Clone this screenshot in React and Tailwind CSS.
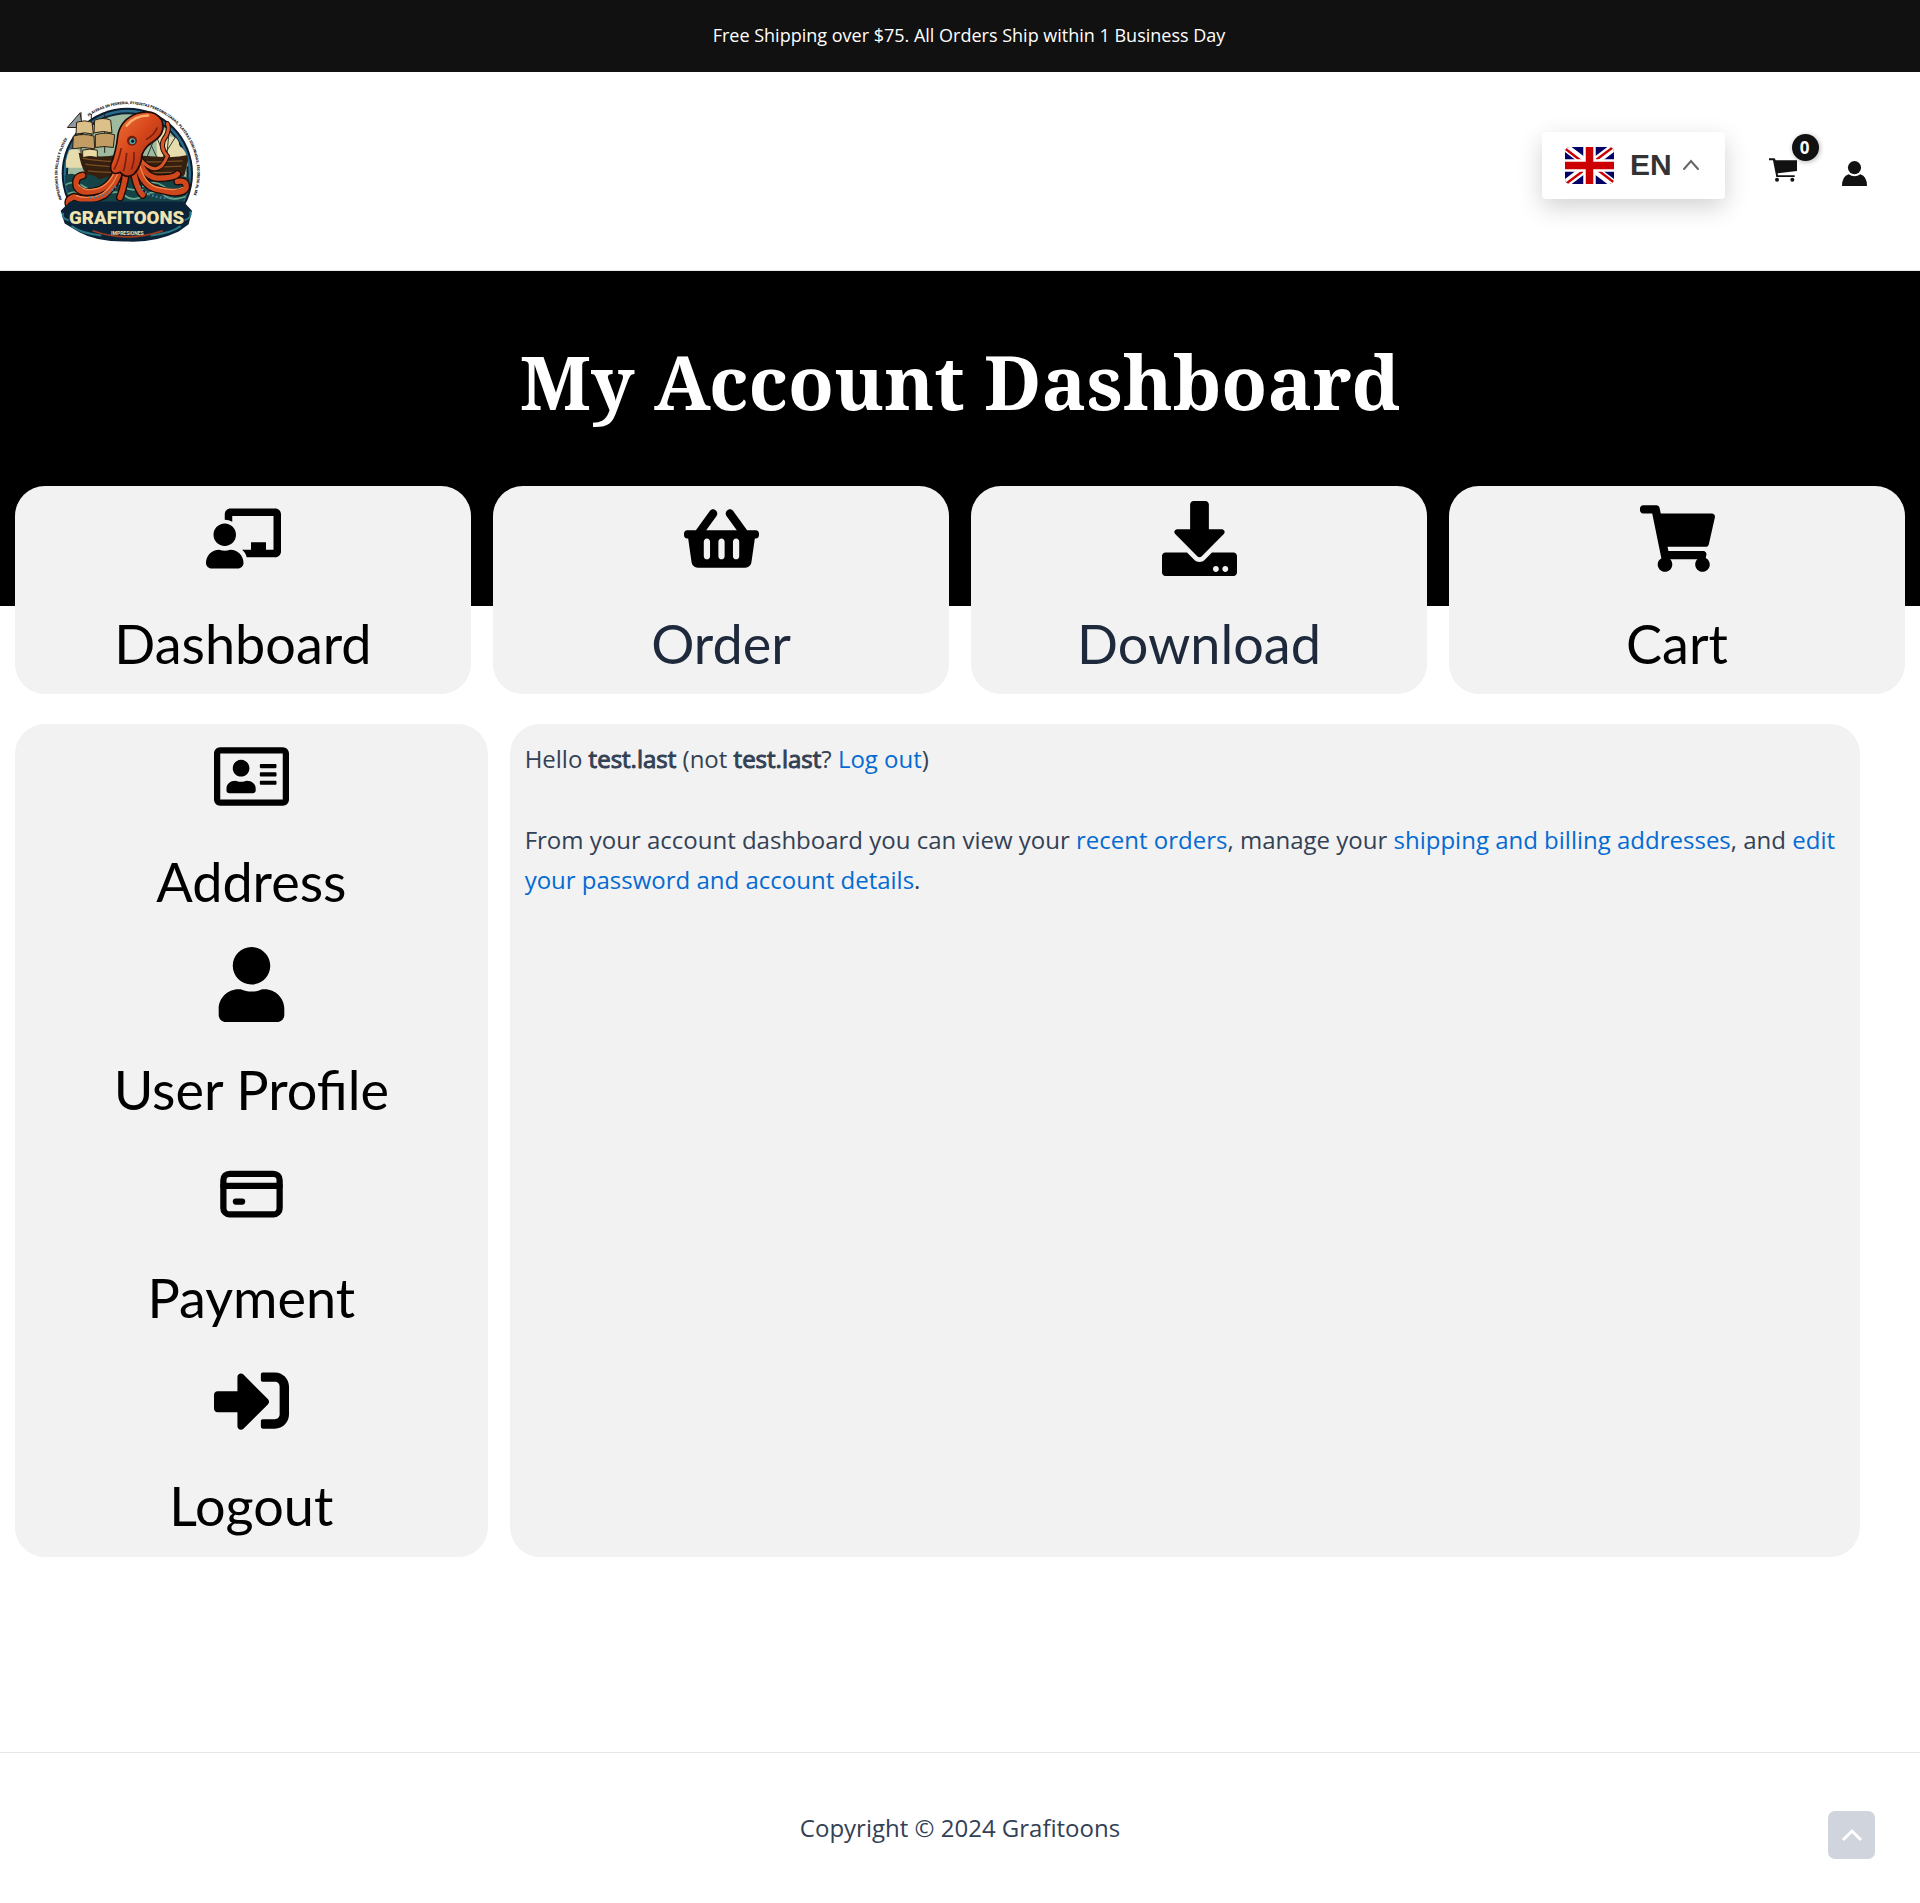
import React from "react";
import {
  FaChalkboardTeacher,
  FaShoppingBasket,
  FaDownload,
  FaShoppingCart,
  FaRegAddressCard,
  FaUser,
  FaSignInAlt,
} from "react-icons/fa";

function Logo() {
  return (
    <svg viewBox="44 32 444 428" className="h-[143px] w-[148px] overflow-visible" role="img" aria-label="Grafitoons">
      <defs>
        <clipPath id="disc"><circle cx="264" cy="252" r="188" /></clipPath>
        <linearGradient id="skin" x1="0" y1="0" x2="1" y2="1">
          <stop offset="0" stopColor="#f07a3c" />
          <stop offset="0.45" stopColor="#d9481c" />
          <stop offset="1" stopColor="#8c2410" />
        </linearGradient>
        <path id="arcLeft" d="M68 330A207 207 0 0 1 100 126" />
        <path id="arcTop" d="M148 81A207 207 0 0 1 456 334" />
      </defs>
      <circle cx="264" cy="252" r="197" fill="#0b1a2c" />
      <circle cx="264" cy="252" r="191" fill="#2a6c8c" />
      <circle cx="264" cy="252" r="184" fill="#0d2233" />
      <g clipPath="url(#disc)">
        <circle cx="264" cy="252" r="178" fill="#9ebba0" />
        <path d="M80 190q25-25 45 0q25-10 30 15q20 5 10 30H80zM350 120q30-10 40 20q30 0 30 30q25 10 25 60h-90z" fill="#e6dcae" />
        <path d="M300 90l60 130M330 90l50 120M360 110l-40 100M390 120l-10 100M410 140l-50 80" stroke="#2a3b35" strokeWidth="3" />
        <path d="M118 190q60 20 120 4l120 8q50 4 92-6l-14 60q-20 26-60 24H180q-50-8-62-90z" fill="#35200f" />
        <path d="M130 206q80 18 300 8M138 224q90 14 290 6M146 244q90 10 280 4" stroke="#7c4c22" strokeWidth="4" fill="none" />
        <path d="M70 262q30-20 50 4q34-22 60 4q60-26 100 0q60-26 90 0q40-24 90 0v200H70z" fill="#144448" />
        <path d="M72 290q30-22 60 0t60 0t60 0t60 0t60 0t80 0M76 318q36-20 60 0t60 0t60 0t60 0t60 0t70 0" stroke="#6aa88c" strokeWidth="5" fill="none" />
        <path d="M70 350h390v110H70z" fill="#0c2b3c" />
      </g>
      <g stroke="#2b2013" strokeWidth="3" strokeLinejoin="round">
        <path d="M125 68v128M156 74v120M196 74v116" />
        <path d="M84 114l38-44l8 44z" fill="#8f9aa0" />
        <path d="M112 98q24-8 46 0l4 36q-26-8-52 0zM166 92q26-10 48 0l4 38q-26-8-54 0z" fill="#dcc08a" />
        <path d="M102 140q30-10 62 0l2 38q-32-8-66 0zM168 136q30-10 58 0l-4 38q-26-6-54 0z" fill="#c29c62" />
        <path d="M130 182q20-6 44 0v22q-22-6-44 0z" fill="#ecd9a4" />
      </g>
      <g fill="none" strokeLinecap="round">
        <g stroke="#1e0b08" strokeWidth="24">
          <path d="M246 200q-16 80-66 102q-56 16-68-10q-8-30 18-34" />
          <path d="M246 220q-8 60-50 96q-50 26-92 6q-26 8-12 32" />
          <path d="M262 210q0 60-20 114" />
          <path d="M296 190q10 70 58 76q50 0 60-12" />
          <path d="M290 200q10 90 66 100q70 20 84-4q4-26-26-20" />
          <path d="M280 220q6 70 30 96" />
        </g>
        <path d="M300 206q56 66 84-6q-28-30-4-60q12-22 4-38" stroke="#1e0b08" strokeWidth="15" />
        <g stroke="#cf471c" strokeWidth="16">
          <path d="M246 200q-16 80-66 102q-56 16-68-10q-8-30 18-34" />
          <path d="M246 220q-8 60-50 96q-50 26-92 6q-26 8-12 32" />
          <path d="M262 210q0 60-20 114" />
          <path d="M296 190q10 70 58 76q50 0 60-12" />
          <path d="M290 200q10 90 66 100q70 20 84-4q4-26-26-20" />
          <path d="M280 220q6 70 30 96" />
        </g>
        <path d="M300 206q56 66 84-6q-28-30-4-60q12-22 4-38" stroke="#d9582a" strokeWidth="9" />
        <g stroke="#f08a4c" strokeWidth="4">
          <path d="M238 212q-18 70-60 84q-44 12-60-10" />
          <path d="M240 236q-12 50-50 76q-40 20-80 6" />
          <path d="M300 220q14 66 58 74q50 12 72 0" />
        </g>
      </g>
      <path d="M236 134Q246 90 292 72Q344 56 366 90Q382 126 348 152Q316 170 308 196Q306 230 284 254Q262 270 242 248Q212 262 214 226Q230 190 236 134z" fill="url(#skin)" stroke="#1e0b08" strokeWidth="5" />
      <path d="M262 108Q286 78 326 78" stroke="#ffb070" strokeWidth="8" fill="none" strokeLinecap="round" />
      <path d="M246 176q-10 44-22 64M262 190q-4 40-10 56M284 188q2 30-8 52M320 150q24-12 34-36" stroke="#7a1e0e" strokeWidth="5" fill="none" />
      <circle cx="278" cy="154" r="15" fill="#6e1c0c" />
      <circle cx="279" cy="155" r="9" fill="#5aa8a4" />
      <circle cx="280" cy="155" r="5" fill="#0b1a2c" />
      <g fill="none" stroke="#4d7fa0" strokeWidth="7" strokeDasharray="5 7">
        <path d="M150 324q50 0 80-34" /><path d="M300 290q30 40 100 34" />
      </g>
      <path d="M64 364l28-28h340l26 28l-10 40l-30 22q-70 34-154 30q-90 2-144-28l-44-26z" fill="#0b2338" />
      <path d="M72 370q-8 16 16 22M452 366q8 18-16 26M96 410q30 22 90 28M424 410q-30 22-90 28" stroke="#2a7a86" strokeWidth="6" fill="none" />
      <path d="M160 424q100 36 210 0" stroke="#a23a1e" strokeWidth="5" fill="none" />
      <text x="262" y="403" textAnchor="middle" fontSize="56" className="font-['Roboto',sans-serif] font-black" fill="#f1e3b0">GRAFITOONS</text>
      <text x="264" y="437" textAnchor="middle" fontSize="15" className="font-['Roboto',sans-serif] font-bold" fill="#f1e3b0">IMPRESIONES</text>
      <g fontSize="11" className="font-['Roboto',sans-serif] font-black" fill="#111">
        <text><textPath href="#arcLeft">IMPRESIONES EN BOLSAS Y OLEICEX</textPath></text>
        <text><textPath href="#arcTop">PLAYERAS EN PEDRERIA, ETIQUETAS PERSONALIZADAS, PLAYERAS SUBLIMADAS, ESCOBEDO NL MX</textPath></text>
      </g>
    </svg>
  );
}

function Flag() {
  return (
    <svg viewBox="0 0 49 37" className="h-[37px] w-[49px] rounded-[5px]" aria-hidden="true">
      <rect width="49" height="37" fill="#006" />
      <path d="M-2-1.5L51 38.5M51-1.5L-2 38.5" stroke="#fff" strokeWidth="8" />
      <path d="M0 1.5L24 20M49 35.5L25 17M49-.5L25 17.5M0 37.5L24 19.5" stroke="#c00" strokeWidth="2.4" />
      <path d="M24.500 0V37M0 18.500H49" stroke="#fff" strokeWidth="12.500" />
      <path d="M24.500 0V37M0 18.500H49" stroke="#c00" strokeWidth="7.500" />
    </svg>
  );
}

function HeaderCart() {
  return (
    <svg viewBox="0 0 84 72" className="h-6 w-7" fill="#111" aria-hidden="true">
      <path d="M0 1h17l3 6h64v32l-58 7 1 6h50v5H22L12 7H0z" />
      <circle cx="24" cy="65" r="6" />
      <circle cx="70" cy="65" r="6" />
    </svg>
  );
}

function HeaderUser() {
  return (
    <svg viewBox="0 0 76 76" className="size-[25px]" fill="#111" aria-hidden="true">
      <circle cx="38" cy="20" r="20" />
      <path d="M20 40q18 13 36 0q20 6 20 36H0q0-30 20-36z" />
    </svg>
  );
}

function PaymentCard(props) {
  return (
    <svg viewBox="0 0 24 24" fill="none" stroke="currentColor" strokeWidth="2" strokeLinecap="round" {...props}>
      <rect x="3" y="6" width="18" height="13" rx="2" />
      <path d="M3 9.900h18M7 14.900h2" />
    </svg>
  );
}

function Tile({ icon: Icon, label, tone = "text-black" }) {
  return (
    <a href="#" className="flex h-52 flex-col items-center pt-[15px]">
      <Icon className="size-[75px] text-black" aria-hidden="true" />
      <span className={"mt-9 font-['Lato',sans-serif] text-[54px] leading-[64px] " + tone}>{label}</span>
    </a>
  );
}

const topTiles = [
  { icon: FaChalkboardTeacher, label: "Dashboard" },
  { icon: FaShoppingBasket, label: "Order", tone: "text-[#1e293b]" },
  { icon: FaDownload, label: "Download", tone: "text-[#1e293b]" },
  { icon: FaShoppingCart, label: "Cart" },
];

const sideTiles = [
  { icon: FaRegAddressCard, label: "Address" },
  { icon: FaUser, label: "User Profile" },
  { icon: PaymentCard, label: "Payment" },
  { icon: FaSignInAlt, label: "Logout" },
];

function Link({ children }) {
  return <a href="#" className="text-[#046bd2]">{children}</a>;
}

function Strong({ children }) {
  return <strong className="font-normal [-webkit-text-stroke:1px_#334155]">{children}</strong>;
}

export default function App() {
  return (
    <div className="bg-white font-['Open_Sans',sans-serif] text-[#334155]">
      <div className="flex h-[72px] items-center justify-center bg-[#111] pb-[2px] pl-[18px] text-lg font-medium text-white">
        Free Shipping over $75. All Orders Ship within 1 Business Day
      </div>

      <header className="flex h-[199px] items-center border-b border-gray-200 pr-[53px] pl-[54px]">
        <a href="#" aria-label="Grafitoons home"><Logo /></a>
        <div className="mb-3 ml-auto flex items-center">
          <button type="button" className="flex h-[67px] w-[183px] items-center rounded-[4px] bg-white pl-[23px] shadow-[0_8px_24px_rgba(0,0,0,0.18)]">
            <Flag />
            <span className="ml-4 pb-[2px] font-['Liberation_Sans',sans-serif] text-[30px] font-bold text-[#333]">EN</span>
            <svg viewBox="0 0 18 12" className="ml-[10px] h-3 w-[18px]" fill="none" stroke="#666" strokeWidth="2" strokeLinecap="round" aria-hidden="true">
              <path d="M2 10l7-8 7 8" />
            </svg>
          </button>
          <a href="#" aria-label="Cart, 0 items" className="relative mt-[10px] ml-11">
            <HeaderCart />
            <span className="absolute -top-[24px] left-[23px] flex size-[27px] items-center justify-center rounded-full bg-[#111] pr-[2px] text-[17px] font-bold text-white shadow-[1px_1px_5px_rgba(0,0,0,0.3)]">0</span>
          </a>
          <a href="#" aria-label="Account" className="mt-4 ml-[45px]"><HeaderUser /></a>
        </div>
      </header>

      <main>
        <div className="bg-black pt-14 pb-[170px]">
          <h1 className="text-center font-['Noto_Serif','DejaVu_Serif_Condensed','DejaVu_Serif',serif] text-[75px] leading-[109px] font-bold text-white">
            My Account Dashboard
          </h1>
        </div>
        <nav aria-label="Account" className="-mt-[120px] grid grid-cols-4 gap-[22px] px-[15px]">
          {topTiles.map((t) => (
            <div key={t.label} className="rounded-[30px] bg-[#f2f2f2]"><Tile {...t} /></div>
          ))}
        </nav>
        <div className="mt-[30px] grid grid-cols-[7fr_20fr] gap-[22px] pr-[60px] pl-[15px]">
          <nav aria-label="Profile" className="rounded-[30px] bg-[#f2f2f2] pb-px">
            {sideTiles.map((t) => <Tile key={t.label} {...t} />)}
          </nav>
          <section className="rounded-[30px] bg-[#f2f2f2] p-[15px] text-2xl leading-10">
            <p className="mb-[41px]">
              Hello <Strong>test.last</Strong> (not <Strong>test.last</Strong>? <Link>Log out</Link>)
            </p>
            <p>
              From your account dashboard you can view your <Link>recent orders</Link>, manage your <Link>shipping and billing addresses</Link>, and <Link>edit your password and account details</Link>.
            </p>
          </section>
        </div>
      </main>

      <footer className="relative mt-[195px] flex h-[151px] items-center justify-center border-t border-gray-200 text-2xl">
        Copyright © 2024 Grafitoons
        <button type="button" aria-label="Scroll to top" className="absolute right-[45px] bottom-11 flex h-12 w-[47px] items-center justify-center rounded-[7px] bg-[#d0d4dc]">
          <svg viewBox="0 0 22 14" className="h-[14px] w-[22px]" fill="none" stroke="#fff" strokeWidth="3" aria-hidden="true">
            <path d="M2 12l9-9 9 9" />
          </svg>
        </button>
      </footer>
    </div>
  );
}
